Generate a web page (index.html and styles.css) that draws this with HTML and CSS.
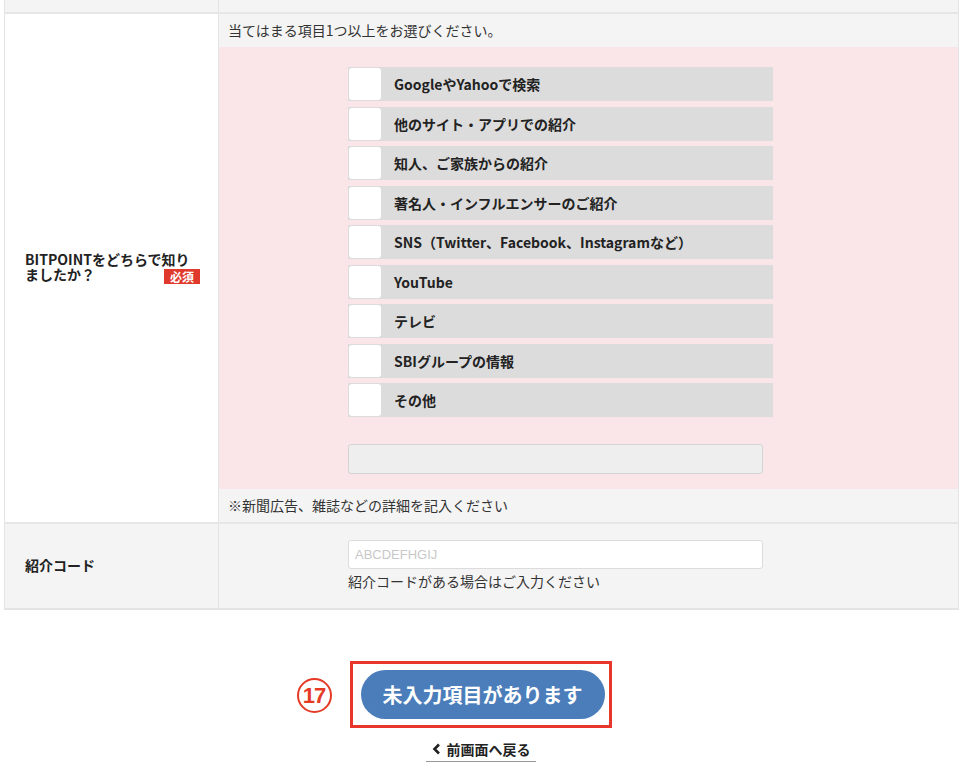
FILE: index.html
```html
<!DOCTYPE html>
<html lang="ja">
<head>
    <meta charset="UTF-8">
    <meta name="viewport" content="width=device-width, initial-scale=1.0">
    <title>アンケート</title>
    <link rel="stylesheet" href="styles.css">
</head>
<body>
    <div class="form-table">
        <div class="row row-top">
            <div class="cell-head"></div>
            <div class="cell-body"></div>
        </div>

        <div class="row">
            <div class="cell-head white">
                <div class="label">BITPOINTをどちらで知りましたか？<span class="req">必須</span></div>
            </div>
            <div class="cell-body">
                <p class="note">当てはまる項目1つ以上をお選びください。</p>
                <div class="choices">
                    <label class="choice"><span class="box"></span>GoogleやYahooで検索</label>
                    <label class="choice"><span class="box"></span>他のサイト・アプリでの紹介</label>
                    <label class="choice"><span class="box"></span>知人、ご家族からの紹介</label>
                    <label class="choice"><span class="box"></span>著名人・インフルエンサーのご紹介</label>
                    <label class="choice"><span class="box"></span>SNS（Twitter、Facebook、Instagramなど）</label>
                    <label class="choice"><span class="box"></span>YouTube</label>
                    <label class="choice"><span class="box"></span>テレビ</label>
                    <label class="choice"><span class="box"></span>SBIグループの情報</label>
                    <label class="choice"><span class="box"></span>その他</label>
                    <input class="other-input" type="text">
                </div>
                <p class="note">※新聞広告、雑誌などの詳細を記入ください</p>
            </div>
        </div>

        <div class="row row-last">
            <div class="cell-head">
                <div class="label">紹介コード</div>
            </div>
            <div class="cell-body code-body">
                <input class="code-input" type="text" placeholder="ABCDEFHGIJ">
                <p class="help">紹介コードがある場合はご入力ください</p>
            </div>
        </div>
    </div>

    <div class="actions">
        <div class="submit-wrap">
            <span class="mark">17</span>
            <div class="submit-frame">
                <button class="submit">未入力項目があります</button>
            </div>
        </div>
        <a class="back" href="#">
            <svg width="12" height="12" viewBox="0 0 12 12"><polyline points="8,1.5 3.5,6 8,10.5" fill="none" stroke="#222" stroke-width="2.6"/></svg>
            前画面へ戻る
        </a>
    </div>
</body>
</html>
```

FILE: styles.css
```css
body {
    margin: 0;
    background-color: #fff;
    font-family: 'Noto Sans CJK JP', 'Liberation Sans', sans-serif;
    color: #333;
}

.form-table {
    margin-left: 4px;
    width: 953px;
    border: 1px solid #e4e4e4;
    border-top: none;
}

.row {
    display: grid;
    grid-template-columns: 214px 1fr;
    border-bottom: 2px solid #e6e6e6;
}

.row-last {
    border-bottom: 1px solid #e4e4e4;
}

.row-top {
    height: 12px;
}

.cell-head {
    background-color: #f4f4f4;
    border-right: 1px solid #e4e4e4;
    display: flex;
    align-items: center;
    padding: 0 18px 0 20px;
}

.cell-head.white {
    background-color: #fff;
}

.cell-body {
    background-color: #f4f4f4;
}

.label {
    width: 100%;
    font-size: 14px;
    font-weight: bold;
    line-height: 15px;
    color: #222;
}

.req {
    float: right;
    background-color: #e03a2c;
    color: #fff;
    font-size: 12px;
    line-height: 15px;
    padding: 0 6px;
    margin-top: 2px;
}

.note {
    margin: 0;
    font-size: 14px;
    line-height: 33px;
    padding-left: 9px;
    color: #333;
}

.choices {
    background-color: #fae6e8;
    padding: 20px 0 15px 129px;
    display: flex;
    flex-direction: column;
    gap: 5.5px;
}

.choice {
    display: flex;
    align-items: center;
    width: 425px;
    height: 34px;
    background-color: #dcdcdc;
    font-size: 14px;
    font-weight: bold;
    color: #222;
}

.box {
    width: 32px;
    height: 32px;
    margin: 1px;
    background-color: #fff;
    border-radius: 3px;
    margin-right: 13px;
}

.other-input {
    margin-top: 21px;
    width: 415px;
    height: 30px;
    box-sizing: border-box;
    background-color: #eee;
    border: 1px solid #d4d4d4;
    border-radius: 3px;
}

.code-body {
    padding: 16px 0 19px 129px;
}

.code-input {
    display: block;
    width: 415px;
    height: 29px;
    box-sizing: border-box;
    border: 1px solid #dcdcdc;
    border-radius: 3px;
    background-color: #fff;
    padding: 0 6px;
    font-size: 13px;
    font-family: 'Liberation Sans', sans-serif;
}

.code-input::placeholder {
    color: #c8c8c8;
}

.help {
    margin: 4px 0 0;
    font-size: 14px;
    line-height: 16px;
    color: #333;
}

.actions {
    width: 953px;
    margin-left: 4px;
    display: flex;
    flex-direction: column;
    align-items: center;
    padding-top: 51px;
}

.submit-wrap {
    position: relative;
}

.mark {
    position: absolute;
    left: -53px;
    top: 17px;
    width: 31px;
    height: 31px;
    border: 2.5px solid #e53a26;
    border-radius: 50%;
    color: #e53a26;
    font-family: 'Liberation Sans', sans-serif;
    font-weight: bold;
    font-size: 22px;
    letter-spacing: -1px;
    line-height: 31px;
    text-align: center;
}

.submit-frame {
    border: 3px solid #e8372a;
    padding: 6px 4px 6px 8px;
}

.submit {
    display: block;
    width: 244px;
    height: 49px;
    border: none;
    border-radius: 25px;
    background-color: #4a7dba;
    color: #fff;
    font-family: 'Noto Sans CJK JP', sans-serif;
    font-size: 20px;
    font-weight: bold;
    cursor: pointer;
}

.back {
    margin-top: 11px;
    display: flex;
    align-items: center;
    gap: 4px;
    padding: 0 5px 2px;
    border-bottom: 1px solid #999;
    color: #222;
    font-size: 14px;
    font-weight: bold;
    text-decoration: none;
}
```
